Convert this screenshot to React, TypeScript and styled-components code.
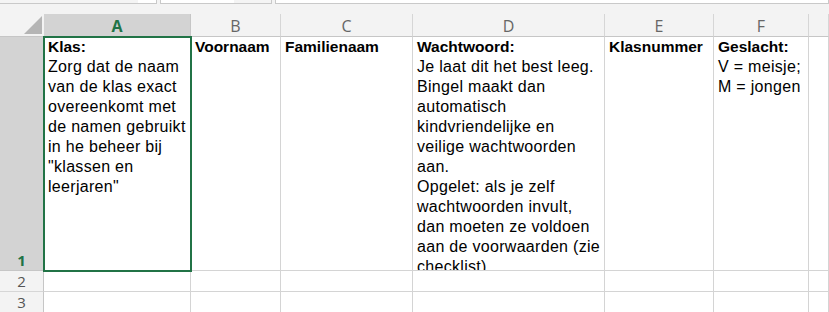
import React from 'react';
import styled, { createGlobalStyle } from 'styled-components';

const GlobalStyle = createGlobalStyle`
  html, body {
    margin: 0;
    padding: 0;
    background: #ffffff;
  }
  #root {
    width: 829px;
    height: 312px;
    overflow: hidden;
  }
`;

const Window = styled.div`
  width: 829px;
  height: 312px;
  background-color: #f3f3f3;
  display: flex;
  flex-direction: column;
  overflow: hidden;
`;

const FormulaBar = styled.div`
  height: 4px;
  display: flex;
  gap: 3px;
  flex-shrink: 0;
`;

const BarBox = styled.div<{ $width?: number; $first?: boolean }>`
  display: flex;
  box-sizing: border-box;
  width: ${p => (p.$width ? `${p.$width}px` : 'auto')};
  flex: ${p => (p.$width ? '0 0 auto' : '1')};
  border: 1px solid #c9c9c9;
  border-top: none;
  border-left-width: ${p => (p.$first ? 0 : 1)}px;
  background: #ffffff;
`;

const BarSegment = styled.div<{ $width?: number; $tone?: 'white' | 'grey' }>`
  width: ${p => (p.$width ? `${p.$width}px` : 'auto')};
  flex: ${p => (p.$width ? '0 0 auto' : '1')};
  background: ${p => (p.$tone === 'grey' ? '#f4f4f4' : '#ffffff')};
`;

const Spacer = styled.div`
  height: 10px;
  flex-shrink: 0;
`;

const Sheet = styled.div`
  display: grid;
  grid-template-columns: 44px 147px 90px 132px 192px 109px 95px 1fr;
  grid-template-rows: 23px 234px 21px 21px;
  background: #ffffff;
`;

const Corner = styled.div`
  background: #f3f3f3;
  border-bottom: 1px solid #c6c6c6;
  display: flex;
  align-items: flex-end;
  justify-content: flex-end;
  padding: 0 2px 2px 0;
  box-sizing: border-box;

  svg {
    display: block;
  }
`;

const ColHeader = styled.div<{ $selected?: boolean }>`
  box-sizing: border-box;
  background: ${p => (p.$selected ? '#d3d3d3' : '#f3f3f3')};
  border-right: 1px solid ${p => (p.$selected ? '#c6c6c6' : '#d6d6d6')};
  border-bottom: 1px solid #c6c6c6;
  display: flex;
  align-items: center;
  justify-content: center;
  font-family: 'Open Sans', 'Noto Sans', sans-serif;
  font-size: 16px;
  font-weight: ${p => (p.$selected ? 700 : 400)};
  color: ${p => (p.$selected ? '#217346' : '#666666')};
  line-height: 1;
  padding-top: 1px;
`;

const RowHeader = styled.div<{ $selected?: boolean }>`
  box-sizing: border-box;
  background: ${p => (p.$selected ? '#d3d3d3' : '#f3f3f3')};
  border-right: 1px solid #c6c6c6;
  border-bottom: 1px solid ${p => (p.$selected ? '#c6c6c6' : '#d6d6d6')};
  display: flex;
  align-items: flex-end;
  justify-content: center;
  font-family: 'Open Sans', 'Noto Sans', sans-serif;
  font-size: 15px;
  line-height: 19px;
  font-weight: ${p => (p.$selected ? 700 : 400)};
  color: ${p => (p.$selected ? '#217346' : '#555555')};
`;

const Cell = styled.div<{ $active?: boolean }>`
  box-sizing: border-box;
  position: relative;
  z-index: ${p => (p.$active ? 2 : 0)};
  border-right: 1px solid #d4d4d4;
  border-bottom: 1px solid #d4d4d4;
  outline: ${p => (p.$active ? '2px solid #217346' : 'none')};
  outline-offset: -1px;
  overflow: hidden;
  padding: 0 2px 0 3px;
  font-family: 'Liberation Sans', Arial, sans-serif;
  font-size: 16px;
  letter-spacing: 0.3px;
  line-height: 20px;
  color: #000000;
  background: #ffffff;
`;

const Line = styled.div<{ $bold?: boolean }>`
  white-space: nowrap;
  font-weight: ${p => (p.$bold ? 700 : 400)};
  font-size: ${p => (p.$bold ? '15.5px' : 'inherit')};
  letter-spacing: ${p => (p.$bold ? '0' : 'inherit')};
  padding-left: 1px;
`;

type CellData = { title: string; lines?: string[] };

const columns = ['A', 'B', 'C', 'D', 'E', 'F', ''];

const firstRow: CellData[] = [
  {
    title: 'Klas:',
    lines: [
      'Zorg dat de naam',
      'van de klas exact',
      'overeenkomt met',
      'de namen gebruikt',
      'in he beheer bij',
      '"klassen en',
      'leerjaren"',
    ],
  },
  { title: 'Voornaam' },
  { title: 'Familienaam' },
  {
    title: 'Wachtwoord:',
    lines: [
      'Je laat dit het best leeg.',
      'Bingel maakt dan',
      'automatisch',
      'kindvriendelijke en',
      'veilige wachtwoorden',
      'aan.',
      'Opgelet: als je zelf',
      'wachtwoorden invult,',
      'dan moeten ze voldoen',
      'aan de voorwaarden (zie',
      'checklist)',
    ],
  },
  { title: 'Klasnummer' },
  { title: 'Geslacht:', lines: ['V = meisje;', 'M = jongen'] },
  { title: '' },
];

function App() {
  return (
    <>
      <GlobalStyle />
      <Window>
        <FormulaBar>
          <BarBox $width={157} $first>
            <BarSegment $width={138} $tone="grey" />
            <BarSegment $tone="white" />
          </BarBox>
          <BarBox $width={112}>
            <BarSegment $width={73} $tone="white" />
            <BarSegment $tone="grey" />
          </BarBox>
          <BarBox>
            <BarSegment $tone="white" />
          </BarBox>
        </FormulaBar>
        <Spacer />
        <Sheet>
          <Corner>
            <svg width="18" height="18" viewBox="0 0 18 18">
              <polygon points="18,0 18,18 0,18" fill="#b5b5b5" />
            </svg>
          </Corner>
          {columns.map((c, i) => (
            <ColHeader key={`h${i}`} $selected={c === 'A'}>
              {c}
            </ColHeader>
          ))}

          <RowHeader $selected>1</RowHeader>
          {firstRow.map((cell, i) => (
            <Cell key={`r1${i}`} $active={i === 0}>
              {cell.title && <Line $bold>{cell.title}</Line>}
              {cell.lines?.map((l, j) => (
                <Line key={j}>{l}</Line>
              ))}
            </Cell>
          ))}

          {[2, 3].map(r => (
            <React.Fragment key={r}>
              <RowHeader>{r}</RowHeader>
              {columns.map((_, i) => (
                <Cell key={`r${r}${i}`} />
              ))}
            </React.Fragment>
          ))}
        </Sheet>
      </Window>
    </>
  );
}

export default App;
